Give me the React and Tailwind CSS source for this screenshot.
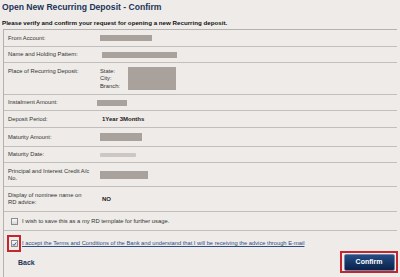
const Redacted = ({ className }) => <div className={`bg-[#a8a19c] ${className}`} />;

const Row = ({ label, h, top = false, children, last = false }) => (
  <div
    className={`flex ${top ? "items-start pt-[5px]" : "items-center"} ${last ? "" : "border-b border-[#c2bebb]"} ${h}`}
  >
    <div className="w-[86px] pl-[4px] text-[5.8px] leading-[7px] text-[#333]">{label}</div>
    <div className="ml-[10px] flex items-start">{children}</div>
  </div>
);

const Checkbox = ({ checked }) => (
  <span className="inline-flex h-[7px] w-[7px] items-center justify-center border border-[#8c8c8c] bg-gradient-to-b from-[#fafafa] to-[#d6d6d6]">
    {checked && (
      <svg viewBox="0 0 10 10" className="h-[6px] w-[6px]">
        <path d="M1.5 5.2 L4 7.8 L8.6 1.8" fill="none" stroke="#2b4a8c" strokeWidth="1.8" />
      </svg>
    )}
  </span>
);

export default function App() {
  return (
    <div className="h-[277px] w-[400px] overflow-hidden bg-[#eeebe8] font-['Liberation_Sans',Arial,sans-serif]">
      <h1 className="pl-[2px] pt-[1px] text-[8.6px] font-bold leading-[12px] text-[#1c3458]">
        Open New Recurring Deposit - Confirm
      </h1>
      <p className="mt-[6px] pl-[2px] text-[6.2px] font-bold leading-[8px] text-[#111]">
        Please verify and confirm your request for opening a new Recurring deposit.
      </p>

      <div className="ml-[3px] mr-[3px] mt-[2px] border-l border-t border-[#b5b1ae]">
        <Row label="From Account:" h="h-[17px]">
          <Redacted className="h-[6px] w-[52px]" />
        </Row>
        <Row label="Name and Holding Pattern:" h="h-[16px]">
          <Redacted className="ml-[2px] h-[6px] w-[75px]" />
        </Row>
        <Row label="Place of Recurring Deposit:" h="h-[32px]" top>
          <div className="w-[28px] text-[5.8px] leading-[7.4px] text-[#333]">
            <div>State:</div>
            <div>City:</div>
            <div>Branch:</div>
          </div>
          <Redacted className="mt-[-1px] h-[23px] w-[48px]" />
        </Row>
        <Row label="Instalment Amount:" h="h-[16px]">
          <Redacted className="ml-[-3px] h-[6px] w-[30px]" />
        </Row>
        <Row label="Deposit Period:" h="h-[17px]">
          <span className="ml-[2px] text-[6px] font-bold text-[#222]">1Year 3Months</span>
        </Row>
        <Row label="Maturity Amount:" h="h-[19px]">
          <Redacted className="h-[8px] w-[42px]" />
        </Row>
        <Row label="Maturity Date:" h="h-[16px]">
          <div className="h-[4px] w-[36px] rounded-[1px] bg-[#cdc7c3]" />
        </Row>
        <Row label="Principal and Interest Credit A/c No." h="h-[24px]">
          <Redacted className="h-[8px] w-[48px]" />
        </Row>
        <Row label="Display of nominee name on RD advice:" h="h-[25px]">
          <span className="ml-[2px] text-[6px] font-bold text-[#222]">NO</span>
        </Row>

        <div className="flex h-[19px] items-center gap-[4px] border-b border-[#c2bebb] pl-[7px]">
          <Checkbox />
          <span className="text-[5.8px] text-[#333]">
            I wish to save this as a my RD template for further usage.
          </span>
        </div>

        <div className="flex h-[20px] items-start gap-[1px] pl-[3px] pt-[4px]">
          <div className="flex h-[17px] w-[14px] items-center justify-center border-2 border-[#c5262e]">
            <Checkbox checked />
          </div>
          <a className="mt-[5px] text-[5.75px] leading-[7px] text-[#2d4d85] underline">
            I accept the Terms and Conditions of the Bank and understand that I will be receiving the advice through E-mail
          </a>
        </div>

        <div className="flex h-[26px] items-start justify-between">
          <span className="ml-[14px] mt-[8px] text-[7px] font-bold leading-[8px] text-[#1c3458]">Back</span>
          <div className="mr-[-1px] flex h-[22px] w-[58px] items-center justify-center border-2 border-[#c5262e]">
            <button className="h-[17px] w-[51px] rounded-[2px] border border-[#6f86aa] bg-gradient-to-b from-[#244d86] to-[#0b2249] text-[7px] font-bold text-white">
              Confirm
            </button>
          </div>
        </div>
      </div>
    </div>
  );
}
